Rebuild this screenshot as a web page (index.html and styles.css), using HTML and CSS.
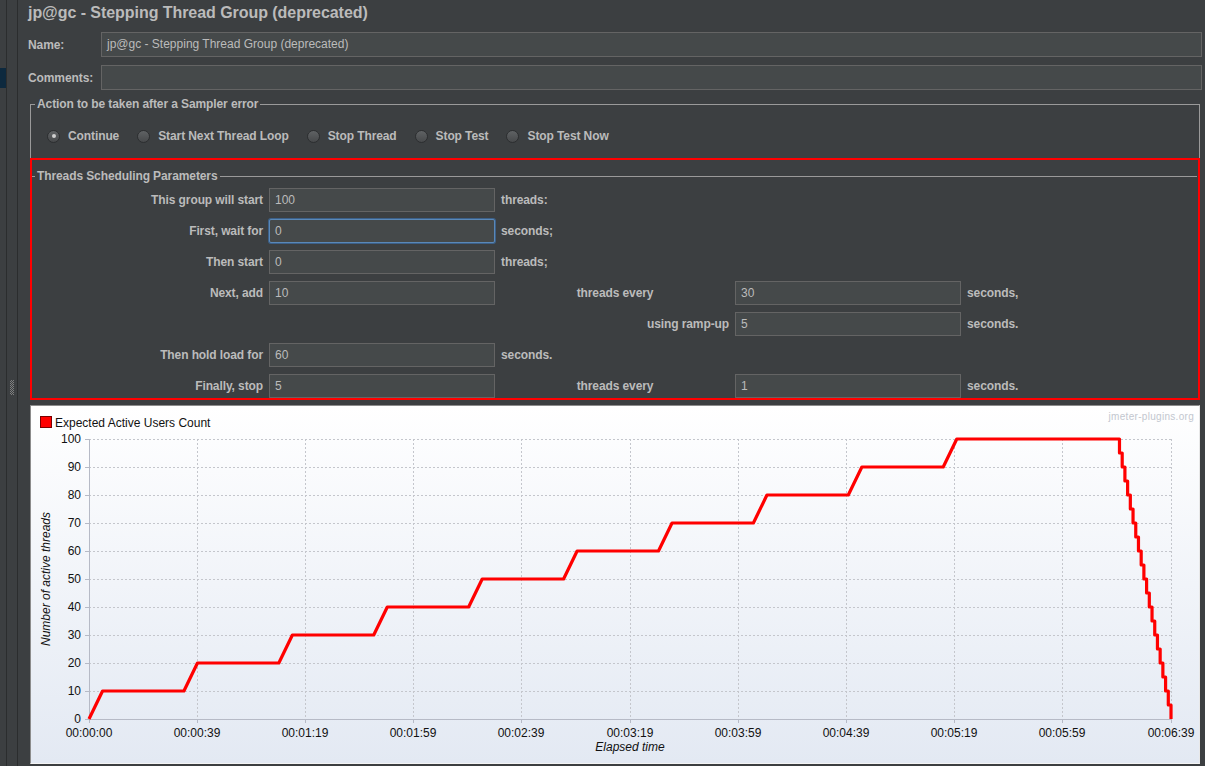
FILE: index.html
```html
<!DOCTYPE html>
<html>
<head>
<meta charset="utf-8">
<title>jp@gc - Stepping Thread Group</title>
<link rel="stylesheet" href="styles.css">
</head>
<body>
<div class="app">
  <div class="sidebar">
    <div class="tree"><div class="sel"></div></div>
    <div class="splitter"><div class="grip"></div></div>
  </div>
  <div class="main">
    <h1 class="title">jp@gc - Stepping Thread Group (deprecated)</h1>
    <div class="field-row">
      <span class="field-label">Name:</span>
      <div class="input wide">jp@gc - Stepping Thread Group (deprecated)</div>
    </div>
    <div class="field-row">
      <span class="field-label">Comments:</span>
      <div class="input wide"></div>
    </div>
    <fieldset class="group action">
      <legend>Action to be taken after a Sampler error</legend>
      <div class="radios">
        <span class="radio-item"><span class="radio checked"></span>Continue</span>
        <span class="radio-item"><span class="radio"></span>Start Next Thread Loop</span>
        <span class="radio-item"><span class="radio"></span>Stop Thread</span>
        <span class="radio-item"><span class="radio"></span>Stop Test</span>
        <span class="radio-item"><span class="radio"></span>Stop Test Now</span>
      </div>
    </fieldset>
    <div class="highlight">
      <fieldset class="group sched">
        <legend>Threads Scheduling Parameters</legend>
        <div class="grid">
          <span class="lbl">This group will start</span>
          <div class="input">100</div>
          <span class="unit">threads:</span>
          <span></span><span></span>

          <span class="lbl">First, wait for</span>
          <div class="input focus">0</div>
          <span class="unit">seconds;</span>
          <span></span><span></span>

          <span class="lbl">Then start</span>
          <div class="input">0</div>
          <span class="unit">threads;</span>
          <span></span><span></span>

          <span class="lbl">Next, add</span>
          <div class="input">10</div>
          <span class="mid">threads every</span>
          <div class="input">30</div>
          <span class="unit">seconds,</span>

          <span></span><span></span>
          <span class="lbl">using ramp-up</span>
          <div class="input">5</div>
          <span class="unit">seconds.</span>

          <span class="lbl">Then hold load for</span>
          <div class="input">60</div>
          <span class="unit">seconds.</span>
          <span></span><span></span>

          <span class="lbl">Finally, stop</span>
          <div class="input">5</div>
          <span class="mid">threads every</span>
          <div class="input">1</div>
          <span class="unit">seconds.</span>
        </div>
      </fieldset>
    </div>
    <div class="chart">
      <svg class="plot" viewBox="0 -1 1168 357" width="1168" height="357" xmlns="http://www.w3.org/2000/svg">
        <g class="gridlines">
          <line x1="58" y1="284.5" x2="1140" y2="284.5"/>
          <line x1="58" y1="256.5" x2="1140" y2="256.5"/>
          <line x1="58" y1="228.5" x2="1140" y2="228.5"/>
          <line x1="58" y1="200.5" x2="1140" y2="200.5"/>
          <line x1="58" y1="172.5" x2="1140" y2="172.5"/>
          <line x1="58" y1="144.5" x2="1140" y2="144.5"/>
          <line x1="58" y1="116.5" x2="1140" y2="116.5"/>
          <line x1="58" y1="88.5" x2="1140" y2="88.5"/>
          <line x1="58" y1="60.5" x2="1140" y2="60.5"/>
          <line x1="58" y1="32.5" x2="1140" y2="32.5"/>
          <line x1="166.5" y1="32" x2="166.5" y2="312"/>
          <line x1="274.5" y1="32" x2="274.5" y2="312"/>
          <line x1="382.5" y1="32" x2="382.5" y2="312"/>
          <line x1="490.5" y1="32" x2="490.5" y2="312"/>
          <line x1="599.5" y1="32" x2="599.5" y2="312"/>
          <line x1="707.5" y1="32" x2="707.5" y2="312"/>
          <line x1="815.5" y1="32" x2="815.5" y2="312"/>
          <line x1="923.5" y1="32" x2="923.5" y2="312"/>
          <line x1="1031.5" y1="32" x2="1031.5" y2="312"/>
          <line x1="1140.5" y1="32" x2="1140.5" y2="312"/>
        </g>
        <g class="axes">
          <line x1="58.5" y1="32" x2="58.5" y2="313"/>
          <line x1="58" y1="312.5" x2="1141" y2="312.5"/>
          <line x1="54" y1="312.5" x2="58" y2="312.5"/>
          <line x1="54" y1="284.5" x2="58" y2="284.5"/>
          <line x1="54" y1="256.5" x2="58" y2="256.5"/>
          <line x1="54" y1="228.5" x2="58" y2="228.5"/>
          <line x1="54" y1="200.5" x2="58" y2="200.5"/>
          <line x1="54" y1="172.5" x2="58" y2="172.5"/>
          <line x1="54" y1="144.5" x2="58" y2="144.5"/>
          <line x1="54" y1="116.5" x2="58" y2="116.5"/>
          <line x1="54" y1="88.5" x2="58" y2="88.5"/>
          <line x1="54" y1="60.5" x2="58" y2="60.5"/>
          <line x1="54" y1="32.5" x2="58" y2="32.5"/>
          <line x1="58.5" y1="312" x2="58.5" y2="316"/>
          <line x1="166.5" y1="312" x2="166.5" y2="316"/>
          <line x1="274.5" y1="312" x2="274.5" y2="316"/>
          <line x1="382.5" y1="312" x2="382.5" y2="316"/>
          <line x1="490.5" y1="312" x2="490.5" y2="316"/>
          <line x1="599.5" y1="312" x2="599.5" y2="316"/>
          <line x1="707.5" y1="312" x2="707.5" y2="316"/>
          <line x1="815.5" y1="312" x2="815.5" y2="316"/>
          <line x1="923.5" y1="312" x2="923.5" y2="316"/>
          <line x1="1031.5" y1="312" x2="1031.5" y2="316"/>
          <line x1="1140.5" y1="312" x2="1140.5" y2="316"/>
        </g>
        <g class="ylabels">
          <text x="50" y="316">0</text>
          <text x="50" y="288">10</text>
          <text x="50" y="260">20</text>
          <text x="50" y="232">30</text>
          <text x="50" y="204">40</text>
          <text x="50" y="176">50</text>
          <text x="50" y="148">60</text>
          <text x="50" y="120">70</text>
          <text x="50" y="92">80</text>
          <text x="50" y="64">90</text>
          <text x="50" y="36">100</text>
        </g>
        <g class="xlabels">
          <text x="58" y="330">00:00:00</text>
          <text x="166" y="330">00:00:39</text>
          <text x="274" y="330">00:01:19</text>
          <text x="382" y="330">00:01:59</text>
          <text x="490" y="330">00:02:39</text>
          <text x="599" y="330">00:03:19</text>
          <text x="707" y="330">00:03:59</text>
          <text x="815" y="330">00:04:39</text>
          <text x="923" y="330">00:05:19</text>
          <text x="1031" y="330">00:05:59</text>
          <text x="1140" y="330">00:06:39</text>
        </g>
        <text class="axis-title" x="599" y="344">Elapsed time</text>
        <text class="axis-title" x="19" y="172" transform="rotate(-90 19 172)">Number of active threads</text>
        <rect class="legend-box" x="9.5" y="9.5" width="11" height="11"/>
        <text class="legend-text" x="24" y="20">Expected Active Users Count</text>
        <text class="watermark" x="1163" y="13">jmeter-plugins.org</text>
        <g transform="translate(58 312) scale(2.7118 -2.8)">
          <polyline class="series" points="0,0 5,10 35,10 40,20 70,20 75,30 105,30 110,40 140,40 145,50 175,50 180,60 210,60 215,70 245,70 250,80 280,80 285,90 315,90 320,100 380,100 380,95 381,95 381,90 382,90 382,85 383,85 383,80 384,80 384,75 385,75 385,70 386,70 386,65 387,65 387,60 388,60 388,55 389,55 389,50 390,50 390,45 391,45 391,40 392,40 392,35 393,35 393,30 394,30 394,25 395,25 395,20 396,20 396,15 397,15 397,10 398,10 398,5 399,5 399,0"/>
        </g>
      </svg>
    </div>
  </div>
</div>
</body>
</html>
```
FILE: styles.css
```css
* { box-sizing: border-box; }
html, body { margin: 0; padding: 0; }
body {
  background: #3c3f41;
  color: #bbbbbb;
  font-family: "Liberation Sans", Arial, sans-serif;
  font-size: 12px;
  width: 1205px;
  height: 766px;
  overflow: hidden;
}
.app { display: flex; height: 766px; }

/* left strip */
.sidebar { width: 20px; flex-shrink: 0; display: flex; }
.tree { width: 7px; border-right: 1px solid #2b2d2e; display: flex; flex-direction: column; }
.tree .sel { margin-top: 68px; height: 20px; background: #0d293e; }
.splitter {
  width: 11px;
  border-right: 1px solid #2b2d2e;
  display: flex;
  align-items: center;
  justify-content: center;
  padding-top: 8px;
}
.grip {
  width: 4px;
  height: 15px;
  background-image:
    linear-gradient(45deg, #8e8e8e 25%, transparent 25%, transparent 75%, #8e8e8e 75%),
    linear-gradient(45deg, #8e8e8e 25%, transparent 25%, transparent 75%, #8e8e8e 75%);
  background-size: 2px 2px;
  background-position: 0 0, 1px 1px;
  opacity: 0.8;
}

/* main panel */
.main { flex: 1; padding: 0 3px 0 8px; }
.title {
  margin: 0;
  height: 32px;
  padding-top: 3px;
  font-size: 16px;
  line-height: 20px;
  font-weight: bold;
  color: #bbbbbb;
  letter-spacing: -0.05px;
}
.field-row { display: flex; align-items: center; height: 25px; }
.field-row + .field-row { margin-top: 8px; }
.field-label { width: 73px; font-weight: bold; letter-spacing: -0.1px; }
.input {
  background: #45494a;
  border: 1px solid #646464;
  color: #bbbbbb;
  padding: 0 5px;
  height: 24px;
  line-height: 22px;
  white-space: nowrap;
  overflow: hidden;
  font-weight: normal;
  letter-spacing: 0;
}
.input.wide { flex: 1; height: 25px; line-height: 23px; }
.input.focus {
  border-color: #5a88b8;
  box-shadow: 0 0 0 1px #3c6089;
  border-radius: 2px;
}

.group { margin: 7px 2px 0; padding: 0; border: 1px solid #9a9a9a; min-width: 0; }
.group legend {
  font-weight: bold;
  line-height: 14px;
  padding: 0 2px;
  margin-left: 4px;
  color: #bbbbbb;
  letter-spacing: -0.1px;
}
.action { border-bottom: none; }
.radios {
  display: flex;
  gap: 18px;
  line-height: 14px;
  padding: 18px 0 15px 16px;
}
.radio-item { display: flex; align-items: center; gap: 8px; font-weight: bold; letter-spacing: -0.1px; }
.radio {
  width: 13px;
  height: 13px;
  border-radius: 50%;
  background: linear-gradient(#5f6264, #47494b);
  border: 1px solid #2c2e30;
  display: flex;
  align-items: center;
  justify-content: center;
}
.radio.checked::after {
  content: "";
  width: 4px;
  height: 4px;
  border-radius: 50%;
  background: #cfcfcf;
}

.highlight { margin: 0 2px; border: 2px solid #ff0000; height: 242px; }
.sched {
  margin: 9px 1px 0 0;
  border: none;
  border-top: 1px solid #9a9a9a;
  padding: 5px 0 0;
}
.sched legend { margin-left: 3px; }
.grid {
  display: grid;
  grid-template-columns: 231px 226px 228px 226px 1fr;
  grid-auto-rows: 24px;
  column-gap: 6px;
  row-gap: 7px;
  align-items: center;
  font-weight: bold;
  letter-spacing: -0.1px;
}
.grid .lbl { text-align: right; }
.grid .unit { text-align: left; }
.grid .mid { text-align: center; }

/* chart */
.chart {
  margin: 5px 2px 0;
  height: 359px;
  border: 1px solid #8c8c8c;
  border-right-color: #e8e8e8;
  border-bottom-color: #f4f4f4;
  background: linear-gradient(#ffffff, #e3e9f3);
}
.plot { display: block; font-family: "Liberation Sans", Arial, sans-serif; }
.gridlines line { stroke: #c4c6cc; stroke-width: 1; stroke-dasharray: 2 2; }
.axes line { stroke: #b6bac6; stroke-width: 1; }
.ylabels text { font-size: 12px; fill: #111; text-anchor: end; }
.xlabels text { font-size: 12px; fill: #111; text-anchor: middle; }
.axis-title { font-size: 12px; font-style: italic; fill: #111; text-anchor: middle; }
.legend-box { fill: #ff0000; stroke: #7a0000; stroke-width: 1; }
.legend-text { font-size: 12px; fill: #111; }
.watermark { font-size: 10px; fill: #c3c7cf; text-anchor: end; letter-spacing: 0.3px; }
.series {
  fill: none;
  stroke: #ff0000;
  stroke-width: 3.2;
  stroke-linejoin: round;
  vector-effect: non-scaling-stroke;
}
```
